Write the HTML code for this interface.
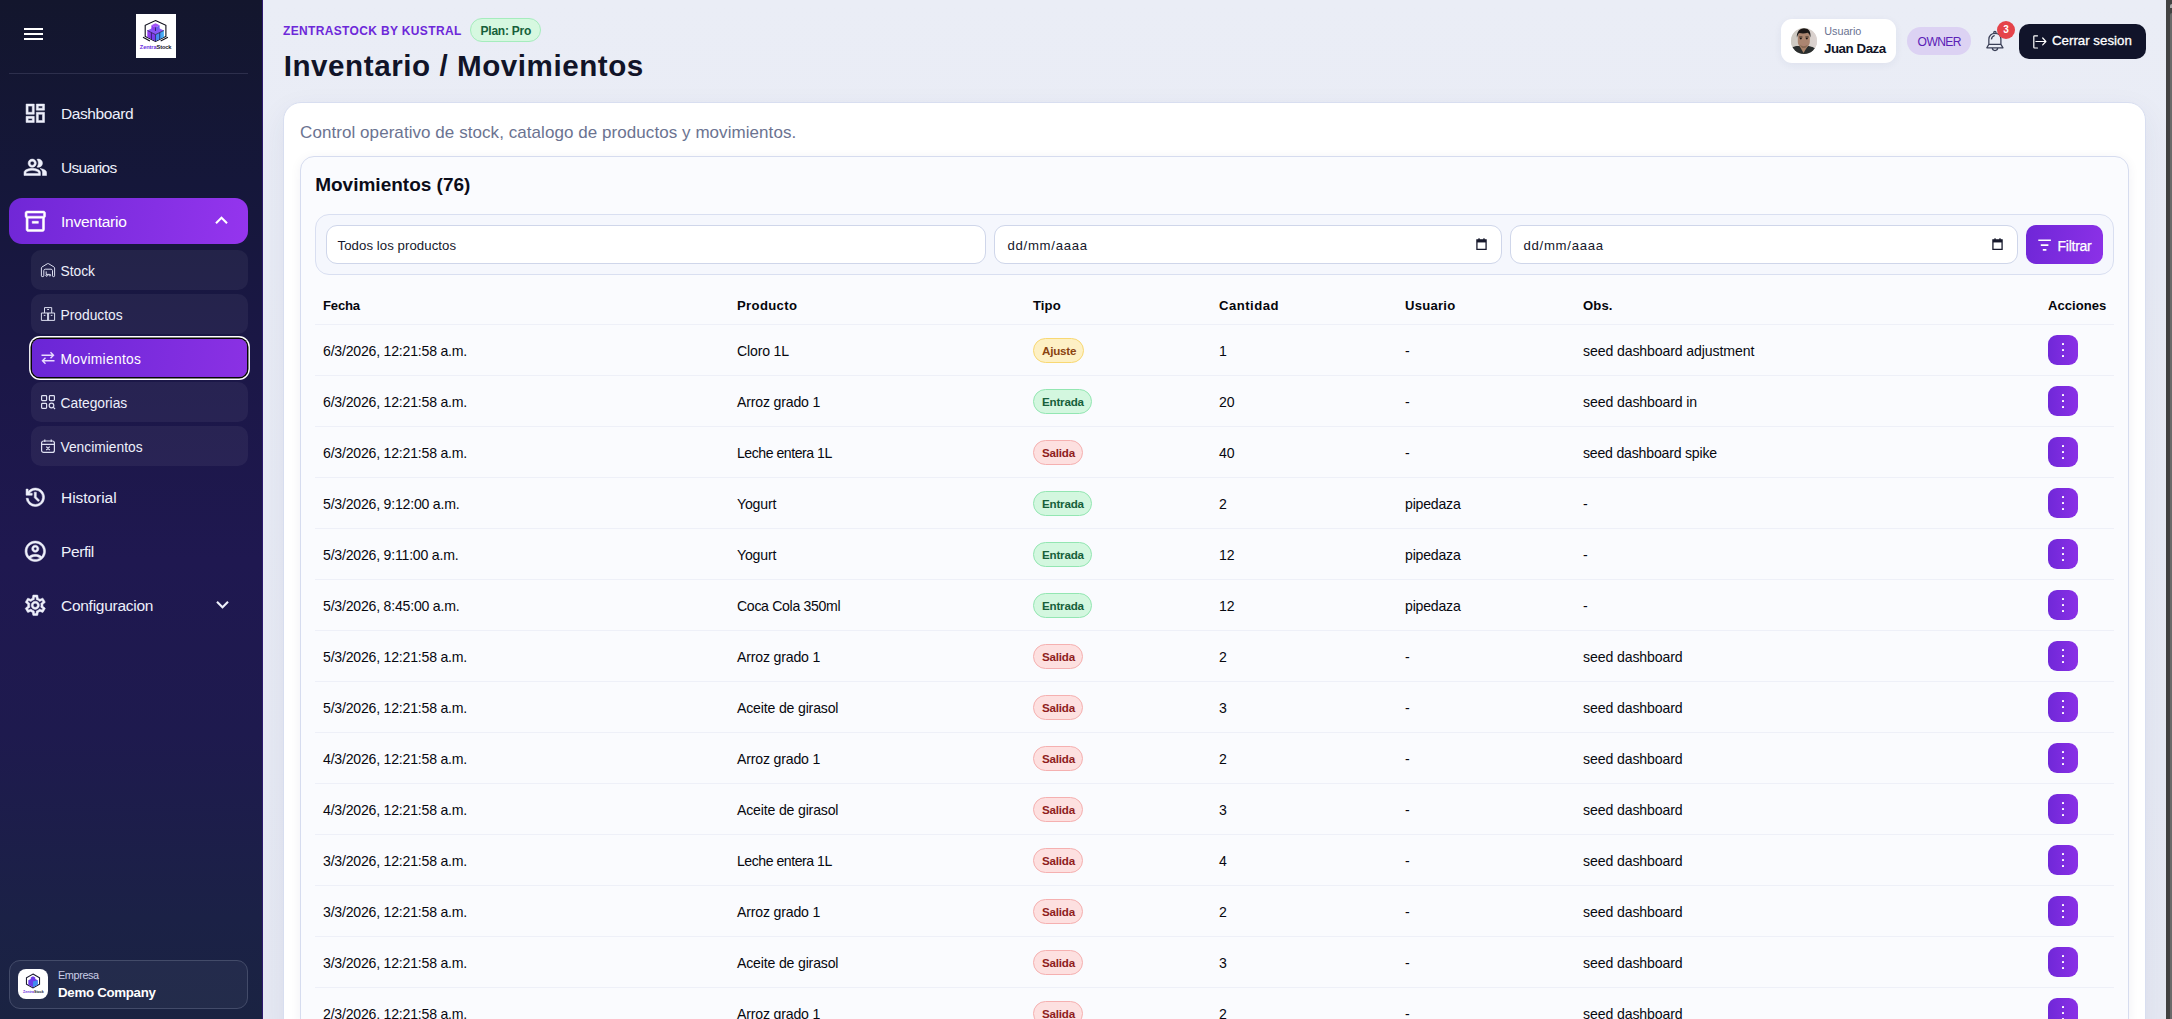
<!DOCTYPE html>
<html lang="es">
<head>
<meta charset="utf-8">
<title>ZentraStock - Inventario / Movimientos</title>
<style>
*{box-sizing:border-box;margin:0;padding:0}
html,body{width:2172px;height:1019px;overflow:hidden}
body{font-family:"Liberation Sans",sans-serif;background:#eaecf6;color:#111428;position:relative}
.abs{position:absolute}
/* ---------- sidebar ---------- */
#side{position:absolute;left:0;top:0;width:263px;height:1019px;background:linear-gradient(180deg,#13162d 0%,#15173a 18%,#1b1747 36%,#1f1850 55%,#1e1a4e 72%,#1b2146 90%,#1a2342 100%);border-right:1px solid #2f1b70}
#side svg{position:absolute;display:block}
.nav{position:absolute;left:61px;color:#eef0fb;font-size:15.5px;line-height:20px;white-space:nowrap;letter-spacing:-.4px}
.sub{position:absolute;left:31px;width:217px;height:40px;border-radius:10px;background:rgba(255,255,255,.055)}
.sub span{position:absolute;left:29.5px;top:12.4px;font-size:13.8px;line-height:20px;color:#eef0fb;white-space:nowrap;letter-spacing:0}
.sub svg{left:9px;top:12px}
.sub.on{background:none}
.sub.on::before{content:"";position:absolute;left:1px;top:1px;right:1px;bottom:1px;border-radius:8px;background:linear-gradient(100deg,#6a26d6,#8b31e4);box-shadow:0 0 0 1.5px #060606,0 0 0 2.9px #fff}
/* ---------- main ---------- */
#main{position:absolute;left:263px;top:0;width:1903px;height:1019px;background:linear-gradient(180deg,#eaedf6 0%,#e6e9f3 100%)}
#sb{position:absolute;left:2166px;top:0;width:6px;height:1019px;background:#424242}
#sb i{position:absolute;left:4px;top:13px;width:2px;height:1006px;background:#6a6a6a;border-radius:2px 0 0 0}
#sb b{position:absolute;left:4px;top:4px;width:2px;height:4px;background:#a8a8a8;border-radius:2px 0 0 0}
.t{position:absolute;white-space:nowrap}
#card{position:absolute;left:283px;top:102px;width:1863px;height:940px;background:#fff;border:1px solid #d8def0;border-radius:18px;box-shadow:0 10px 30px rgba(40,50,110,.07)}
#panel{position:absolute;left:300px;top:156px;width:1829px;height:880px;background:#fafbfe;border:1px solid #d6dcef;border-radius:14px;box-shadow:0 2px 12px rgba(30,40,80,.06)}
#fbar{position:absolute;left:315px;top:214px;width:1799px;height:61px;background:#f5f7fd;border:1px solid #d9dff1;border-radius:14px}
.inp{position:absolute;top:225px;height:39px;background:#fff;border:1px solid #cfd6ea;border-radius:11px;font-size:13.2px;line-height:20px;padding-top:10.3px;color:#15172b;padding-left:10.5px;white-space:nowrap;letter-spacing:.07px}
table{position:absolute;left:315px;top:283px;width:1799px;border-collapse:collapse;table-layout:fixed;font-size:14.1px;line-height:20px;color:#07080f;letter-spacing:-.21px}
th{height:41px;color:#05060c;text-align:left;padding:5px 8px 0;font-weight:700;font-size:13.1px;border-bottom:1px solid #eef0f8;letter-spacing:.1px}
td{height:51px;padding:3px 8px 0;border-bottom:1px solid #eef0f8;white-space:nowrap;vertical-align:middle}
td:nth-child(6){letter-spacing:-.11px}td:nth-child(2){letter-spacing:-.17px}
.bd{display:block;width:50px;height:25px;line-height:23px;border-radius:13px;padding:0 0 0 8px;font-size:11.6px;font-weight:700;border:1px solid;letter-spacing:-.19px;margin-top:-1px}
.aj{width:51px;background:#fdf0c4;border-color:#f8d873;color:#8a4310}
.en{width:59px;background:#d3f7df;border-color:#93e6b2;color:#17603a}
.sa{width:50px;background:#fde0e0;border-color:#f5b0b0;color:#8f1d1d}
.act{display:block;width:30px;height:30px;border-radius:9px;margin-top:-2px;background:linear-gradient(90deg,#7028d8,#8a30e6);position:relative}
.act i{position:absolute;left:13.9px;width:2.4px;height:2.4px;background:#fff;border-radius:.6px}
</style>
</head>
<body>
<div id="main"></div>
<div id="sb"><b></b><i></i></div>

<!-- ================= SIDEBAR ================= -->
<div id="side">
  <!-- hamburger -->
  <svg style="left:23.500px;top:27px" width="19" height="14" viewBox="0 0 19 14"><path d="M0 2h19M0 7h19M0 12h19" stroke="#fff" stroke-width="2" fill="none"/></svg>
  <!-- logo -->
  <div class="abs" style="left:136px;top:14px;width:40px;height:44px;background:#fff">
    <svg style="left:0;top:0" width="40" height="44" viewBox="0 0 40 44">
      <defs><linearGradient id="lgp" x1="0" y1="0" x2="1" y2="1"><stop offset="0" stop-color="#9b3cf2"/><stop offset="1" stop-color="#6d3be8"/></linearGradient><linearGradient id="lgb" x1="0" y1="0" x2="1" y2="0"><stop offset="0" stop-color="#4b7df3"/><stop offset="1" stop-color="#45b4f5"/></linearGradient></defs>
      <path d="M19.500 6.500 29.900 11.300v11.200L19.500 27.400 9.200 22.500V11.300z" fill="none" stroke="#0c0c18" stroke-width="1.100"/>
      <path d="M7 23.300l6.900 3.600M31.900 23.300 24.700 26.900" stroke="#0c0c18" stroke-width="1.100"/>
      <path d="M11.300 16.500 19.500 12.400 27.900 16.500 19.500 20.600z" fill="#8a55f6"/>
      <path d="M11.300 16.500 19.500 20.600V27.200L11.300 23z" fill="url(#lgp)"/>
      <path d="M19.500 20.600 27.900 16.500V23L19.500 27.200z" fill="url(#lgb)"/>
      <path d="M15.400 11.300 19.500 9.200 23.600 11.300 19.500 13.400z" fill="#a352f7"/>
      <path d="M15.400 11.300 19.500 13.400V17L15.400 14.900z" fill="#8b3df0"/>
      <path d="M19.500 13.400 23.600 11.300V14.900L19.500 17z" fill="#6c5cf0"/>
      <path d="M19.500 20.600v6.600M15.400 18.600v6.500M23.700 18.600v6.500M19.500 13.400V17M11.300 16.500l8.200 4.100 8.400-4.100" stroke="#1c1245" stroke-width=".7" fill="none"/>
    </svg>
    <div class="t" id="lgt" style="left:3.800px;top:28.600px;font-size:5.700px;line-height:8px;font-weight:700;color:#16162c;letter-spacing:-.12px"><span style="color:#6a2fe0">Zentra</span>Stock</div>
  </div>
  <div class="abs" style="left:9px;top:73px;width:239px;height:1px;background:#2d2f4c"></div>

  <!-- Dashboard -->
  <svg style="left:22.7px;top:100.7px" width="24.6" height="24.6" viewBox="0 0 24 24" fill="#eef0fb" stroke="#eef0fb" stroke-width=".5"><path d="M19 5v2h-4V5zM9 5v6H5V5zm10 8v6h-4v-6zM9 17v2H5v-2zM21 3h-8v6h8zM11 3H3v10h8zm10 8h-8v10h8zm-10 4H3v6h8z"/></svg>
  <div class="nav" style="top:103.5px">Dashboard</div>
  <!-- Usuarios -->
  <svg style="left:22.7px;top:154.7px" width="24.6" height="24.6" viewBox="0 0 24 24" fill="#eef0fb" stroke="#eef0fb" stroke-width=".5"><path d="M16.67 13.13C18.04 14.06 19 15.32 19 17v3h4v-3c0-2.18-3.57-3.47-6.33-3.87M15 12c2.21 0 4-1.79 4-4s-1.79-4-4-4c-.47 0-.91.1-1.33.24C14.5 5.27 15 6.58 15 8s-.5 2.730-1.330 3.760c.420.140.860.240 1.330.240m-6 0c2.210 0 4-1.790 4-4s-1.790-4-4-4-4 1.790-4 4 1.790 4 4 4m0-6c1.100 0 2 .900 2 2s-.900 2-2 2-2-.900-2-2 .900-2 2-2m0 7c-2.670 0-8 1.340-8 4v3h16v-3c0-2.660-5.330-4-8-4m6 5H3v-.990C3.200 16.290 6.300 15 9 15s5.800 1.290 6 2z"/></svg>
  <div class="nav" style="top:157.5px;letter-spacing:-.7px">Usuarios</div>
  <!-- Inventario (active) -->
  <div class="abs" style="left:9px;top:198px;width:239px;height:46px;border-radius:13px;background:linear-gradient(100deg,#7027d6 0%,#8530e4 60%,#9535ee 100%)"></div>
  <svg style="left:22.7px;top:208.7px" width="24.6" height="24.6" viewBox="0 0 24 24" fill="#fff" stroke="#fff" stroke-width=".5"><path d="M20 2H4c-1 0-2 .9-2 2v3.010c0 .720.430 1.340 1 1.690V20c0 1.100 1.100 2 2 2h14c.900 0 2-.900 2-2V8.700c.570-.350 1-.970 1-1.690V4c0-1.100-1-2-2-2m-1 18H5V9h14zm1-13H4V4h16zM9 12h6v2H9z"/></svg>
  <div class="nav" style="top:211.5px;color:#fff;letter-spacing:-.25px">Inventario</div>
  <svg style="left:209.4px;top:208.4px" width="25" height="25" viewBox="0 0 24 24" fill="#fff"><path d="m12 8-6 6 1.410 1.410L12 10.830l4.590 4.580L18 14z"/></svg>

  <!-- sub items -->
  <div class="sub" style="top:250px"><svg width="16" height="16" viewBox="0 0 16 16" fill="none" stroke="#dcdef0" stroke-width="1"><path d="M1.400 13.900V6c0-.4.200-.8.600-1L7.400 1.700c.4-.2.800-.2 1.200 0L14 5c.4.200.600.600.600 1v7.900c0 .4-.3.700-.7.700h-.700c-.4 0-.7-.3-.7-.7V8.600c0-.8-.6-1.400-1.400-1.400H5.200c-.8 0-1.400.6-1.400 1.400v5.300c0 .4-.3.700-.7.700h-1c-.4 0-.7-.3-.7-.7z"/><path d="M6.200 9.400v3h3.400"/><circle cx="6.600" cy="13.500" r=".8"/><circle cx="9.900" cy="13.200" r=".8"/></svg><span>Stock</span></div>
  <div class="sub" style="top:294px"><svg width="16" height="16" viewBox="0 0 16 16" fill="none" stroke="#dcdef0" stroke-width="1"><path d="M4.500 7V1.600h7.200V7M1.400 7h13.200v7.400H1.400zM7.600 7v7.400M8.600 7v7.400M7.200 3.500h1.800M3.800 9.400h1.600M10.800 9.400h1.600"/></svg><span>Productos</span></div>
  <div class="sub on" style="top:338px"><svg width="16" height="16" viewBox="0 0 16 16" fill="none" stroke="#e9dcff" stroke-width="1.400"><path d="M1.500 5.200h12M10.500 2.200l3 3-3 3M14.500 10.800h-12M5.500 7.800l-3 3 3 3"/></svg><span style="color:#fff;letter-spacing:.3px">Movimientos</span></div>
  <div class="sub" style="top:382px"><svg width="16" height="16" viewBox="0 0 16 16" fill="none" stroke="#dfe1f2" stroke-width="1.200"><rect x="1.600" y="1.600" width="5" height="5" rx=".8"/><rect x="9.400" y="1.600" width="5" height="5" rx=".8"/><rect x="1.600" y="9.400" width="5" height="5" rx=".8"/><circle cx="11.500" cy="11.500" r="2.300"/><path d="M13.200 13.200l1.800 1.800"/></svg><span>Categorias</span></div>
  <div class="sub" style="top:426px"><svg width="16" height="16" viewBox="0 0 16 16" fill="none" stroke="#dfe1f2" stroke-width="1.200"><rect x="1.600" y="3" width="12.800" height="11.400" rx="2"/><path d="M1.600 6.400h12.800M4.800 1.400v2.600M11.200 1.400v2.600M6.300 8.600l3.400 3.400M9.700 8.600l-3.400 3.400"/></svg><span>Vencimientos</span></div>

  <!-- Historial -->
  <svg style="left:22.7px;top:484.7px" width="24.6" height="24.6" viewBox="0 0 24 24" fill="#eef0fb" stroke="#eef0fb" stroke-width=".5"><path d="M12 21q-3.450 0-6.012-2.287T3.050 13H5.100q.350 2.600 2.313 4.300T12 19q2.925 0 4.963-2.037T19 12t-2.037-4.963T12 5q-1.725 0-3.225.800T6.250 8H9v2H3V4h2v2.350q1.275-1.600 3.113-2.475T12 3q1.875 0 3.513.713t2.850 1.924 1.925 2.850T21 12t-.712 3.513-1.925 2.850-2.850 1.925T12 21m2.800-4.800L11 12.400V7h2v4.600l3.200 3.200z"/></svg>
  <div class="nav" style="top:487.5px;letter-spacing:-.05px">Historial</div>
  <!-- Perfil -->
  <svg style="left:22.7px;top:538.7px" width="24.6" height="24.6" viewBox="0 0 24 24" fill="#eef0fb" stroke="#eef0fb" stroke-width=".5"><path d="M12 2C6.480 2 2 6.480 2 12s4.480 10 10 10 10-4.480 10-10S17.520 2 12 2M7.350 18.500C8.660 17.560 10.260 17 12 17s3.340.560 4.650 1.500c-1.310.940-2.910 1.500-4.650 1.500s-3.340-.560-4.650-1.500m10.790-1.380C16.450 15.800 14.320 15 12 15s-4.450.800-6.140 2.120C4.700 15.730 4 13.950 4 12c0-4.420 3.580-8 8-8s8 3.580 8 8c0 1.950-.700 3.730-1.860 5.120M12 6c-1.930 0-3.500 1.570-3.500 3.500S10.070 13 12 13s3.500-1.570 3.500-3.500S13.930 6 12 6m0 5c-.830 0-1.500-.670-1.500-1.500S11.170 8 12 8s1.500.670 1.500 1.500S12.830 11 12 11"/></svg>
  <div class="nav" style="top:541.5px">Perfil</div>
  <!-- Configuracion -->
  <svg style="left:22.7px;top:592.7px" width="24.6" height="24.6" viewBox="0 0 24 24" fill="#eef0fb" stroke="#eef0fb" stroke-width=".5"><path d="M19.43 12.98c.04-.32.07-.64.07-.98 0-.34-.03-.66-.07-.98l2.11-1.65c.19-.15.24-.42.12-.64l-2-3.46c-.09-.16-.26-.25-.44-.25-.06 0-.12.01-.17.03l-2.49 1c-.52-.4-1.08-.73-1.69-.98l-.38-2.650C14.460 2.180 14.250 2 14 2h-4c-.250 0-.460.180-.490.420l-.380 2.650c-.610.250-1.170.590-1.690.980l-2.490-1c-.060-.020-.120-.030-.180-.030-.170 0-.340.090-.430.250l-2 3.460c-.130.220-.070.490.120.640l2.110 1.650c-.040.320-.070.650-.070.980 0 .330.030.660.070.980l-2.110 1.650c-.190.150-.240.420-.120.640l2 3.460c.090.160.260.250.440.250.060 0 .120-.010.170-.030l2.490-1c.520.400 1.080.730 1.690.980l.380 2.650c.030.240.240.420.490.420h4c.250 0 .460-.180.490-.420l.380-2.650c.610-.250 1.170-.590 1.690-.980l2.490 1c.060.020.120.030.180.030.170 0 .340-.090.430-.250l2-3.460c.120-.220.070-.490-.120-.640zm-1.980-1.710c.040.310.050.520.050.730 0 .210-.020.430-.050.730l-.140 1.130.890.700 1.080.840-.700 1.210-1.270-.510-1.040-.420-.900.680c-.430.320-.840.560-1.250.730l-1.060.430-.160 1.130-.200 1.350h-1.400l-.190-1.350-.160-1.130-1.060-.430c-.430-.180-.830-.410-1.230-.710l-.910-.700-1.060.430-1.270.510-.700-1.210 1.080-.840.890-.700-.140-1.130c-.030-.310-.050-.540-.050-.740s.020-.430.050-.730l.140-1.130-.890-.700-1.080-.840.700-1.210 1.270.510 1.040.420.900-.680c.430-.320.840-.560 1.250-.730l1.060-.430.160-1.130.200-1.350h1.390l.190 1.350.160 1.130 1.060.430c.430.180.830.410 1.230.710l.910.700 1.060-.430 1.270-.510.700 1.210-1.070.850-.890.700zM12 8c-2.210 0-4 1.790-4 4s1.790 4 4 4 4-1.790 4-4-1.790-4-4-4m0 6c-1.100 0-2-.900-2-2s.900-2 2-2 2 .900 2 2-.900 2-2 2"/></svg>
  <div class="nav" style="top:595.5px;letter-spacing:-.27px">Configuracion</div>
  <svg style="left:209.6px;top:591.8px" width="25" height="25" viewBox="0 0 24 24" fill="#eef0fb"><path d="M16.590 8.590 12 13.170 7.410 8.590 6 10l6 6 6-6z"/></svg>

  <!-- company -->
  <div class="abs" style="left:9px;top:960px;width:239px;height:49px;border-radius:11px;background:rgba(255,255,255,.045);border:1px solid #434b69"></div>
  <div class="abs" style="left:18px;top:969px;width:30px;height:30px;border-radius:8px;background:#fff">
    <svg style="left:6px;top:4px" width="18" height="16" viewBox="0 0 28 24"><path d="M14 1.200 24.200 7v10L14 22.800 3.800 17V7z" fill="none" stroke="#14142a" stroke-width="1.600"/><path d="M14 4.500l3.500 2v2.400l3.800 2.100v6.800L14 21.600 6.700 17.800V11l3.800-2.100V6.500z" fill="#6d3be8"/><path d="M14 12.800l7.300-1.800v6.800L14 21.600z" fill="#3f8df0"/></svg>
    <div class="t" style="left:5px;top:21px;font-size:3.600px;line-height:5px;font-weight:700;color:#16162c"><span style="color:#6a2fe0">Zentra</span>Stock</div>
  </div>
  <div class="t" style="left:58px;top:965.4px;font-size:10.9px;line-height:20px;color:#c9cde6;letter-spacing:-.4px">Empresa</div>
  <div class="t" style="left:58px;top:983.3px;font-size:13.3px;line-height:20px;font-weight:700;color:#fff;letter-spacing:-.3px">Demo Company</div>
</div>

<!-- ================= TOP BAR ================= -->
<div class="t" id="brand" style="left:283px;top:20.9px;font-size:12px;line-height:20px;font-weight:700;color:#6d28d9;letter-spacing:.35px">ZENTRASTOCK BY KUSTRAL</div>
<div class="abs" style="left:470px;top:18px;width:71px;height:24px;border-radius:12px;background:#d6f8e0;border:1px solid #a5ecbd"></div>
<div class="t" id="plan" style="left:480.5px;top:20.9px;font-size:12px;line-height:20px;font-weight:700;color:#17603a;letter-spacing:-.23px">Plan: Pro</div>
<div class="t" id="title" style="left:283.7px;top:45.6px;font-size:29.6px;line-height:40px;font-weight:700;color:#111428;letter-spacing:.55px">Inventario / Movimientos</div>

<!-- user chip -->
<div class="abs" style="left:1781px;top:19px;width:115px;height:44px;border-radius:11px;background:#fff;box-shadow:0 2px 8px rgba(40,50,110,.06)"></div>
<div class="abs" style="left:1791px;top:28px;width:26px;height:26px;border-radius:13px;overflow:hidden;background:#d8d4cf">
  <svg width="26" height="26" viewBox="0 0 26 26"><defs><filter id="bl" x="-10%" y="-10%" width="120%" height="120%"><feGaussianBlur stdDeviation=".55"/></filter><linearGradient id="abg" x1="0" x2="1"><stop offset="0" stop-color="#cdc9c2"/><stop offset=".55" stop-color="#d4cec8"/><stop offset="1" stop-color="#dcd3d1"/></linearGradient></defs><rect width="26" height="26" fill="url(#abg)"/><g filter="url(#bl)"><path d="M-1 27v-4.500c0-2.300 3-3.800 6.500-4.500h12c3.500.7 8 2.200 8 4.500V27z" fill="#2a2f2e"/><path d="M8.300 17.500l4.200 7.600 4.600-7.600z" fill="#a98167"/><path d="M6.800 9c0-4 2.400-5.800 6-5.800s6 1.800 6 5.800v4.800c0 3.400-2.700 6.400-6 6.400s-6-3-6-6.400z" fill="#ab8570"/><path d="M9 16.400c1.200 2.300 6.300 2.300 7.600 0-.6 2.600-2 3.700-3.800 3.700S9.600 19 9 16.400z" fill="#8a6a55"/><path d="M5.900 9.600C5.400 3.800 8.600.2 13 .2s7.200 3 6.400 9.200c-.6-2-1.300-3.800-2.800-4.600-2.300.8-6 .9-8.200.2-1.300 1-1.900 2.600-2.500 4.600z" fill="#1b1917"/><path d="M8.200 9h3.200M14.400 9h3.200" stroke="#2b211c" stroke-width=".9"/><ellipse cx="9.800" cy="10.600" rx="1.100" ry=".8" fill="#1d1512"/><ellipse cx="15.800" cy="10.600" rx="1.100" ry=".8" fill="#1d1512"/><path d="M11 16.200c1.300.6 2.700.6 4 0-.9 1-3 1-4 0z" fill="#b5767a"/></g></svg>
</div>
<div class="t" id="ulab" style="left:1824.3px;top:20.8px;font-size:10.8px;line-height:20px;color:#6a7290;letter-spacing:-.04px">Usuario</div>
<div class="t" id="uname" style="left:1824px;top:38.6px;font-size:13.3px;line-height:20px;font-weight:700;color:#111428;letter-spacing:-.45px">Juan Daza</div>
<!-- owner -->
<div class="abs" style="left:1907px;top:27px;width:64px;height:28px;border-radius:14px;background:#dcd2f3"></div>
<div class="t" id="owner" style="left:1917.6px;top:32.2px;font-size:12.1px;line-height:20px;color:#5b21b6;letter-spacing:-.6px">OWNER</div>
<!-- bell -->
<svg class="abs" style="left:1985px;top:30px" width="20" height="22" viewBox="0 0 20 22" fill="none" stroke="#3a3f56" stroke-width="1.250" stroke-linejoin="round"><circle cx="9.900" cy="2.400" r="1.150"/><path d="M3.850 14.400V9.500c0-4 2.650-6.100 6.050-6.100s6 2.100 6 6.100v4.900M3.850 14.400h12.050M3.850 14.400 1.800 17.800h16.200l-2.100-3.400M7.300 18.100a2.700 2.400 0 0 0 5.400 0M6.400 9.400c.2-2 1.400-3.400 3.300-3.900"/></svg>
<div class="abs" style="left:1997px;top:21px;width:18px;height:18px;border-radius:9px;background:#e5434a"></div>
<div class="t" style="left:2003.3px;top:24.3px;font-size:10px;line-height:12px;font-weight:700;color:#fff">3</div>
<!-- logout -->
<div class="abs" style="left:2019px;top:24px;width:127px;height:35px;border-radius:10px;background:#11142a"></div>
<svg class="abs" style="left:2033px;top:35px" width="14" height="14" viewBox="0 0 14 14" fill="none" stroke="#fff" stroke-width="1.200" stroke-linecap="round" stroke-linejoin="round"><path d="M4.500 .800H1.500c-.5 0-.7.200-.7.700V12.300c0 .5.200.7.700.7h3M2.900 6.500h9.800M9.700 3l3.200 3.500-3.200 3.400"/></svg>
<div class="t" id="logout" style="left:2052px;top:31.4px;font-size:13.3px;line-height:20px;color:#fff;-webkit-text-stroke:.3px #fff">Cerrar sesion</div>

<!-- ================= CARD ================= -->
<div id="card"></div>
<div class="t" id="desc" style="left:300.1px;top:123.1px;font-size:17px;line-height:20px;color:#6b7391;letter-spacing:.06px">Control operativo de stock, catalogo de productos y movimientos.</div>
<div id="panel"></div>
<div class="t" id="h2" style="left:315.2px;top:175.3px;font-size:19px;line-height:20px;font-weight:700;color:#0b0c18">Movimientos (76)</div>
<div id="fbar"></div>
<div class="inp" id="sel" style="left:326px;width:660px">Todos los productos</div>
<div class="inp" id="d1" style="left:994px;width:508px;padding-left:12.5px;letter-spacing:.7px">dd/mm/aaaa</div>
<div class="inp" id="d2" style="left:1510px;width:508px;padding-left:12.5px;letter-spacing:.7px">dd/mm/aaaa</div>
<svg class="abs" style="left:1476px;top:238.300px" width="11" height="12" viewBox="0 0 12 13"><path d="M1 2h10v10.300H1z" fill="none" stroke="#16182b" stroke-width="1.400"/><path d="M1 2h10v2.800H1z" fill="#16182b"/><path d="M3.300 .3v2M8.700 .3v2" stroke="#16182b" stroke-width="1.400"/></svg>
<svg class="abs" style="left:1992px;top:238.300px" width="11" height="12" viewBox="0 0 12 13"><path d="M1 2h10v10.300H1z" fill="none" stroke="#16182b" stroke-width="1.400"/><path d="M1 2h10v2.800H1z" fill="#16182b"/><path d="M3.300 .3v2M8.700 .3v2" stroke="#16182b" stroke-width="1.400"/></svg>
<div class="abs" style="left:2026px;top:225px;width:77px;height:39px;border-radius:10px;background:linear-gradient(100deg,#6f27d7,#8c31e7)"></div>
<svg class="abs" style="left:2038px;top:239px" width="13" height="12" viewBox="0 0 13 12" fill="none" stroke="#fff" stroke-width="1.600"><path d="M.3 1.300h12.600M2.800 6.100h7.600M4.800 10.900h3.600"/></svg>
<div class="t" id="filtrar" style="left:2057.5px;top:235.5px;font-size:14px;line-height:20px;color:#fff;letter-spacing:-.25px;-webkit-text-stroke:.25px #fff">Filtrar</div>

<!-- ================= TABLE ================= -->
<table>
<colgroup><col style="width:414px"><col style="width:296px"><col style="width:186px"><col style="width:186px"><col style="width:178px"><col style="width:465px"><col style="width:74px"></colgroup>
<thead><tr><th style="letter-spacing:-.2px">Fecha</th><th style="letter-spacing:.35px">Producto</th><th>Tipo</th><th style="letter-spacing:.5px">Cantidad</th><th style="letter-spacing:.25px">Usuario</th><th>Obs.</th><th style="letter-spacing:0">Acciones</th></tr></thead>
<tbody>
<tr><td>6/3/2026, 12:21:58 a.m.</td><td>Cloro 1L</td><td><span class="bd aj">Ajuste</span></td><td>1</td><td>-</td><td>seed dashboard adjustment</td><td><span class="act"><i style="top:8px"></i><i style="top:13.800px"></i><i style="top:19.600px"></i></span></td></tr>
<tr><td>6/3/2026, 12:21:58 a.m.</td><td>Arroz grado 1</td><td><span class="bd en">Entrada</span></td><td>20</td><td>-</td><td>seed dashboard in</td><td><span class="act"><i style="top:8px"></i><i style="top:13.800px"></i><i style="top:19.600px"></i></span></td></tr>
<tr><td>6/3/2026, 12:21:58 a.m.</td><td style="letter-spacing:-.47px">Leche entera 1L</td><td><span class="bd sa">Salida</span></td><td>40</td><td>-</td><td style="letter-spacing:-.2px">seed dashboard spike</td><td><span class="act"><i style="top:8px"></i><i style="top:13.800px"></i><i style="top:19.600px"></i></span></td></tr>
<tr><td>5/3/2026, 9:12:00 a.m.</td><td>Yogurt</td><td><span class="bd en">Entrada</span></td><td>2</td><td>pipedaza</td><td>-</td><td><span class="act"><i style="top:8px"></i><i style="top:13.800px"></i><i style="top:19.600px"></i></span></td></tr>
<tr><td>5/3/2026, 9:11:00 a.m.</td><td>Yogurt</td><td><span class="bd en">Entrada</span></td><td>12</td><td>pipedaza</td><td>-</td><td><span class="act"><i style="top:8px"></i><i style="top:13.800px"></i><i style="top:19.600px"></i></span></td></tr>
<tr><td>5/3/2026, 8:45:00 a.m.</td><td style="letter-spacing:-.32px">Coca Cola 350ml</td><td><span class="bd en">Entrada</span></td><td>12</td><td>pipedaza</td><td>-</td><td><span class="act"><i style="top:8px"></i><i style="top:13.800px"></i><i style="top:19.600px"></i></span></td></tr>
<tr><td>5/3/2026, 12:21:58 a.m.</td><td>Arroz grado 1</td><td><span class="bd sa">Salida</span></td><td>2</td><td>-</td><td>seed dashboard</td><td><span class="act"><i style="top:8px"></i><i style="top:13.800px"></i><i style="top:19.600px"></i></span></td></tr>
<tr><td>5/3/2026, 12:21:58 a.m.</td><td>Aceite de girasol</td><td><span class="bd sa">Salida</span></td><td>3</td><td>-</td><td>seed dashboard</td><td><span class="act"><i style="top:8px"></i><i style="top:13.800px"></i><i style="top:19.600px"></i></span></td></tr>
<tr><td>4/3/2026, 12:21:58 a.m.</td><td>Arroz grado 1</td><td><span class="bd sa">Salida</span></td><td>2</td><td>-</td><td>seed dashboard</td><td><span class="act"><i style="top:8px"></i><i style="top:13.800px"></i><i style="top:19.600px"></i></span></td></tr>
<tr><td>4/3/2026, 12:21:58 a.m.</td><td>Aceite de girasol</td><td><span class="bd sa">Salida</span></td><td>3</td><td>-</td><td>seed dashboard</td><td><span class="act"><i style="top:8px"></i><i style="top:13.800px"></i><i style="top:19.600px"></i></span></td></tr>
<tr><td>3/3/2026, 12:21:58 a.m.</td><td style="letter-spacing:-.47px">Leche entera 1L</td><td><span class="bd sa">Salida</span></td><td>4</td><td>-</td><td>seed dashboard</td><td><span class="act"><i style="top:8px"></i><i style="top:13.800px"></i><i style="top:19.600px"></i></span></td></tr>
<tr><td>3/3/2026, 12:21:58 a.m.</td><td>Arroz grado 1</td><td><span class="bd sa">Salida</span></td><td>2</td><td>-</td><td>seed dashboard</td><td><span class="act"><i style="top:8px"></i><i style="top:13.800px"></i><i style="top:19.600px"></i></span></td></tr>
<tr><td>3/3/2026, 12:21:58 a.m.</td><td>Aceite de girasol</td><td><span class="bd sa">Salida</span></td><td>3</td><td>-</td><td>seed dashboard</td><td><span class="act"><i style="top:8px"></i><i style="top:13.800px"></i><i style="top:19.600px"></i></span></td></tr>
<tr><td>2/3/2026, 12:21:58 a.m.</td><td>Arroz grado 1</td><td><span class="bd sa">Salida</span></td><td>2</td><td>-</td><td>seed dashboard</td><td><span class="act"><i style="top:8px"></i><i style="top:13.800px"></i><i style="top:19.600px"></i></span></td></tr>
</tbody>
</table>
</body>
</html>
